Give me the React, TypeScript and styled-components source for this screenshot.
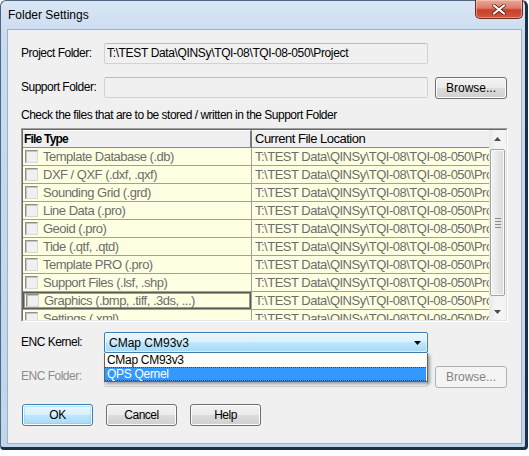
import React from 'react';
import styled, { createGlobalStyle, css } from 'styled-components';

const SANS = `"Liberation Sans", Arial, sans-serif`;

const Global = createGlobalStyle`
  html, body { margin: 0; padding: 0; background: #ffffff; }
  body { width: 529px; height: 456px; overflow: hidden; font-family: ${SANS}; }
  * { box-sizing: border-box; }
`;

const Window = styled.div`
  width: 528px;
  height: 450px;
  border: 1px solid #4c6580;
  border-right: 3px solid #1c3048;
  border-bottom: 3px solid #1c3048;
  border-radius: 6px 6px 4px 4px;
  background: linear-gradient(180deg, #d9e6f5 0%, #c9dbef 40px, #c1d5ec 100%);
  padding: 0 3px 3px 6px;
  display: flex;
  flex-direction: column;
`;

const TitleBar = styled.div`
  height: 28px;
  display: flex;
  justify-content: space-between;
  align-items: flex-start;
`;

const Title = styled.div`
  font-family: ${SANS};
  font-size: 12px;
  line-height: 16px;
  color: #000;
  padding: 6px 0 0 1px;
`;

const CloseButton = styled.div`
  width: 48px;
  height: 19px;
  margin-top: -1px;
  margin-right: -1px;
  border: 1px solid #6b2a22;
  border-top: none;
  border-radius: 0 0 5px 5px;
  background: linear-gradient(180deg, #e9a99a 0%, #dc7c68 45%, #c8412c 55%, #d2553d 100%);
  box-shadow: inset 0 0 0 1px rgba(255, 220, 210, 0.45);
  display: flex;
  align-items: center;
  justify-content: center;
`;

const Client = styled.div`
  position: relative;
  width: 515px;
  height: 415px;
  border: 1px solid #9fb2c8;
  background: #f0f0f0;
  padding: 13px 0 0 13px;
  display: flex;
  flex-direction: column;
`;

const FieldRow = styled.div<{ $mt?: number }>`
  display: flex;
  align-items: flex-start;
  margin-top: ${(p) => p.$mt ?? 0}px;
`;

const Label = styled.div<{ $disabled?: boolean }>`
  width: 83px;
  height: 21px;
  font-family: ${SANS};
  font-size: 12px;
  letter-spacing: -0.5px;
  line-height: 21px;
  white-space: nowrap;
  color: ${(p) => (p.$disabled ? '#8d8d8d' : '#000')};
`;

const TextBox = styled.div`
  width: 324px;
  height: 21px;
  border: 1px solid #d2d2d2;
  border-top-color: #bcbcbc;
  border-radius: 2px;
  background: #f0f0f0;
  padding-left: 2px;
  font-family: ${SANS};
  font-size: 12px;
  letter-spacing: -0.35px;
  line-height: 19px;
  color: #000;
  white-space: nowrap;
  overflow: hidden;
`;

const Button = styled.div<{ $default?: boolean; $disabled?: boolean; $w?: number }>`
  width: ${(p) => p.$w ?? 71}px;
  height: 22px;
  border-radius: 3px;
  font-family: ${SANS};
  font-size: 12px;
  letter-spacing: -0.5px;
  line-height: 20px;
  text-align: center;
  color: #000;
  border: 1px solid #707070;
  background: linear-gradient(180deg, #f2f2f2 0%, #ebebeb 50%, #dddddd 50%, #cfcfcf 100%);
  box-shadow: inset 0 0 0 1px #fcfcfc;
  ${(p) =>
    p.$default &&
    css`
      border-color: #3c7fb1;
      background: linear-gradient(180deg, #eaf6fd 0%, #d9f0fc 50%, #bee6fd 50%, #a7d9f5 100%);
      box-shadow: inset 0 0 0 1px #fefefe, inset 0 0 0 2px rgba(72, 210, 245, 0.35);
    `}
  ${(p) =>
    p.$disabled &&
    css`
      border-color: #adb2b5;
      background: #f4f4f4;
      box-shadow: none;
      color: #838383;
    `}
`;

const SideButton = styled(Button)`
  margin-left: 7px;
  letter-spacing: 0;
`;

const Hint = styled.div`
  margin-top: 9px;
  font-family: ${SANS};
  font-size: 12px;
  letter-spacing: -0.5px;
  line-height: 14px;
  color: #000;
`;

const Table = styled.div`
  margin-top: 6px;
  width: 487px;
  height: 194px;
  border: 1px solid;
  border-color: #a0a0a0 #ffffff #ffffff #a0a0a0;
  display: flex;
`;

const TableInner = styled.div`
  flex: 1;
  display: flex;
  border: 1px solid;
  border-color: #696969 #e3e3e3 #e3e3e3 #696969;
  overflow: hidden;
`;

const Grid = styled.div`
  flex: 1;
  overflow: hidden;
  display: grid;
  grid-template-columns: 229px 1fr;
  grid-auto-rows: 18px;
  align-content: start;
`;

const HeadCell = styled.div<{ $bold?: boolean }>`
  height: 18px;
  background: #f0f0f0;
  border-top: 1px solid #ffffff;
  border-bottom: 1px solid #8a8a8a;
  border-right: ${(p) => (p.$bold ? '2px solid #7a7a7a' : 'none')};
  padding-left: ${(p) => (p.$bold ? 1 : 3)}px;
  font-family: ${SANS};
  font-size: ${(p) => (p.$bold ? 12 : 13)}px;
  letter-spacing: ${(p) => (p.$bold ? -0.8 : -0.5)}px;
  font-weight: ${(p) => (p.$bold ? 700 : 400)};
  line-height: 16px;
  color: #000;
  white-space: nowrap;
  overflow: hidden;
`;

const Cell = styled.div<{ $first?: boolean; $focus?: boolean }>`
  height: 18px;
  background: #ffffe1;
  border-bottom: 1px solid #a0a0a0;
  border-right: ${(p) => (p.$first ? '1px solid #a0a0a0' : 'none')};
  display: flex;
  align-items: center;
  gap: 5px;
  padding-left: ${(p) => (p.$first ? 2 : 3)}px;
  font-family: ${SANS};
  font-size: 13px;
  letter-spacing: -0.5px;
  color: #6d6d6d;
  white-space: nowrap;
  overflow: hidden;
  ${(p) =>
    p.$focus &&
    css`
      box-shadow: inset 0 0 0 1px #5a5a5a, inset 0 0 0 2px #9a9a9a;
      padding-left: 3px;
    `}
`;

const CellText = styled.span`
  line-height: 17px;
  padding-bottom: 1px;
`;

const Check = styled.span`
  flex: none;
  width: 13px;
  height: 13px;
  border: 1px solid;
  border-color: #8f8f8f #d8d8d8 #d8d8d8 #8f8f8f;
  background: #f0f0f0;
  box-shadow: inset 1px 1px 0 #c4c4c4;
`;

const ScrollBar = styled.div`
  width: 17px;
  flex: none;
  background: linear-gradient(90deg, #e8e8e8 0%, #f4f4f4 40%, #f4f4f4 100%);
  display: flex;
  flex-direction: column;
`;

const ArrowBtn = styled.div`
  height: 17px;
  display: flex;
  align-items: center;
  justify-content: center;
`;

const Track = styled.div`
  flex: 1;
  padding: 2px 1px 0 1px;
`;

const Thumb = styled.div`
  height: 147px;
  border: 1px solid #a3a3a3;
  border-radius: 2px;
  background: linear-gradient(90deg, #f3f3f3 0%, #e8e8e8 50%, #dadada 100%);
  box-shadow: inset 0 0 0 1px #fbfbfb;
  display: flex;
  flex-direction: column;
  align-items: center;
  justify-content: center;
  gap: 2px;
`;

const Grip = styled.span`
  width: 6px;
  height: 1px;
  background: #8a8a8a;
`;

const Combo = styled.div`
  width: 324px;
  height: 21px;
  border: 1px solid #3c7fb1;
  border-radius: 2px;
  background: linear-gradient(180deg, #eaf6fd 0%, #d9f0fc 50%, #bee6fd 50%, #a7d9f5 100%);
  box-shadow: inset 0 0 0 1px rgba(255, 255, 255, 0.6);
  display: flex;
  align-items: center;
  justify-content: space-between;
  padding: 0 6px 0 4px;
  font-family: ${SANS};
  font-size: 12px;
  color: #000;
`;

const DropList = styled.div`
  position: absolute;
  left: 96px;
  top: 323px;
  width: 324px;
  border: 1px solid #646464;
  border-top: none;
  background: #ffffff;
  box-shadow: 2px 2px 3px rgba(0, 0, 0, 0.35);
`;

const DropItem = styled.div<{ $selected?: boolean }>`
  height: 14px;
  padding-left: 2px;
  font-family: ${SANS};
  font-size: 12px;
  letter-spacing: -0.3px;
  line-height: 13px;
  color: ${(p) => (p.$selected ? '#ffffff' : '#000')};
  background: ${(p) => (p.$selected ? '#3399ff' : '#ffffff')};
  border: 1px dotted ${(p) => (p.$selected ? '#1a4f8a' : 'transparent')};
  border-left: none;
  border-right: none;
  margin: 0 1px 0 0;
`;

const ButtonRow = styled.div`
  margin-top: 16px;
  margin-left: 1px;
  display: flex;
  gap: 13px;
`;

const Arrow = ({ dir, color = '#4d4d4d' }: { dir: 'up' | 'down'; color?: string }) => (
  <svg width="7" height="4" viewBox="0 0 7 4">
    <path d={dir === 'up' ? 'M0 4 L3.5 0 L7 4 Z' : 'M0 0 L7 0 L3.5 4 Z'} fill={color} />
  </svg>
);

const files = [
  'Template Database (.db)',
  'DXF / QXF (.dxf, .qxf)',
  'Sounding Grid (.grd)',
  'Line Data (.pro)',
  'Geoid (.pro)',
  'Tide (.qtf, .qtd)',
  'Template PRO (.pro)',
  'Support Files (.lsf, .shp)',
  'Graphics (.bmp, .tiff, .3ds, ...)',
  'Settings (.xml)',
];

const LOC = 'T:\\TEST Data\\QINSy\\TQI-08\\TQI-08-050\\Project';

export default function App() {
  return (
    <>
      <Global />
      <Window>
        <TitleBar>
          <Title>Folder Settings</Title>
          <CloseButton>
            <svg width="14" height="11" viewBox="0 0 14 11">
              <path d="M2 1.5 L12 9.5 M12 1.5 L2 9.5" stroke="#5a2018" strokeWidth="3.6" strokeLinecap="round" />
              <path d="M2 1.5 L12 9.5 M12 1.5 L2 9.5" stroke="#ffffff" strokeWidth="2.2" strokeLinecap="round" />
            </svg>
          </CloseButton>
        </TitleBar>
        <Client>
          <FieldRow>
            <Label>Project Folder:</Label>
            <TextBox>{LOC}</TextBox>
          </FieldRow>
          <FieldRow $mt={13}>
            <Label>Support Folder:</Label>
            <TextBox />
            <SideButton $w={72}>Browse...</SideButton>
          </FieldRow>
          <Hint>Check the files that are to be stored / written in the Support Folder</Hint>
          <Table>
            <TableInner>
              <Grid>
                <HeadCell $bold>File Type</HeadCell>
                <HeadCell>Current File Location</HeadCell>
                {files.map((f, i) => (
                  <React.Fragment key={f}>
                    <Cell $first $focus={i === 8}>
                      <Check />
                      <CellText>{f}</CellText>
                    </Cell>
                    <Cell>
                      <CellText>{LOC}</CellText>
                    </Cell>
                  </React.Fragment>
                ))}
              </Grid>
              <ScrollBar>
                <ArrowBtn>
                  <Arrow dir="up" />
                </ArrowBtn>
                <Track>
                  <Thumb>
                    <Grip />
                    <Grip />
                    <Grip />
                    <Grip />
                  </Thumb>
                </Track>
                <ArrowBtn>
                  <Arrow dir="down" />
                </ArrowBtn>
              </ScrollBar>
            </TableInner>
          </Table>
          <FieldRow $mt={10}>
            <Label>ENC Kernel:</Label>
            <Combo>
              <span>CMap CM93v3</span>
              <Arrow dir="down" color="#000" />
            </Combo>
          </FieldRow>
          <FieldRow $mt={13}>
            <Label $disabled>ENC Folder:</Label>
            <TextBox />
            <SideButton $w={72} $disabled>
              Browse...
            </SideButton>
          </FieldRow>
          <ButtonRow>
            <Button $default>OK</Button>
            <Button>Cancel</Button>
            <Button>Help</Button>
          </ButtonRow>
          <DropList>
            <DropItem>CMap CM93v3</DropItem>
            <DropItem $selected>QPS Qernel</DropItem>
          </DropList>
        </Client>
      </Window>
    </>
  );
}
